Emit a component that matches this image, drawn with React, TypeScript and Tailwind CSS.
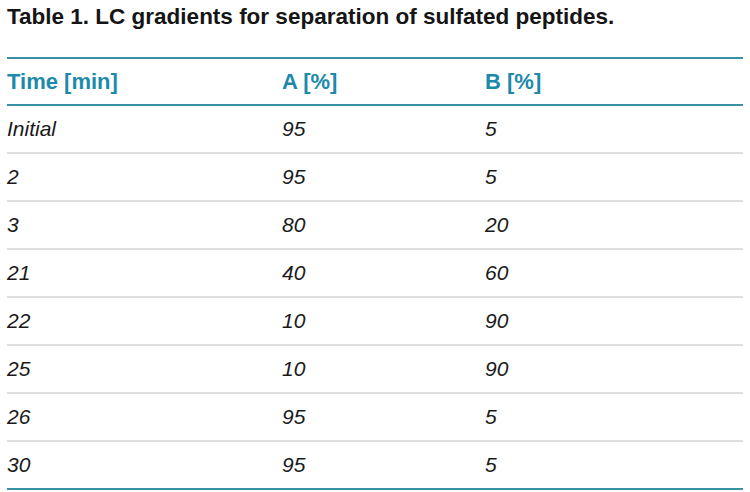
import React from "react";

const rows: [string, string, string][] = [
  ["Initial", "95", "5"],
  ["2", "95", "5"],
  ["3", "80", "20"],
  ["21", "40", "60"],
  ["22", "10", "90"],
  ["25", "10", "90"],
  ["26", "95", "5"],
  ["30", "95", "5"],
];

export default function App() {
  return (
    <div className="w-[750px] h-[492px] bg-white overflow-hidden pl-[7px] pr-[7px] font-['Liberation_Sans',Arial,sans-serif]">
      <h1 className="mt-[4px] text-[22.5px] leading-[26px] font-bold text-[#151515]">
        Table 1. LC gradients for separation of sulfated peptides.
      </h1>
      <div className="mt-[27px] border-t-2 border-[#3a90a4]">
        <div className="flex h-[47px] items-center border-b-2 border-[#3a90a4] text-[22px] font-bold text-[#1d8aab]">
          <div className="w-[275px]">Time [min]</div>
          <div className="w-[203px]">A [%]</div>
          <div className="flex-1">B [%]</div>
        </div>
        {rows.map((r, i) => (
          <div
            key={i}
            className={`flex h-[48px] items-center border-b-2 text-[21px] italic text-[#1a1a1a] ${
              i === rows.length - 1 ? "border-[#3a90a4]" : "border-[#dedede]"
            }`}
          >
            <div className="w-[275px]">{r[0]}</div>
            <div className="w-[203px]">{r[1]}</div>
            <div className="flex-1">{r[2]}</div>
          </div>
        ))}
      </div>
    </div>
  );
}
